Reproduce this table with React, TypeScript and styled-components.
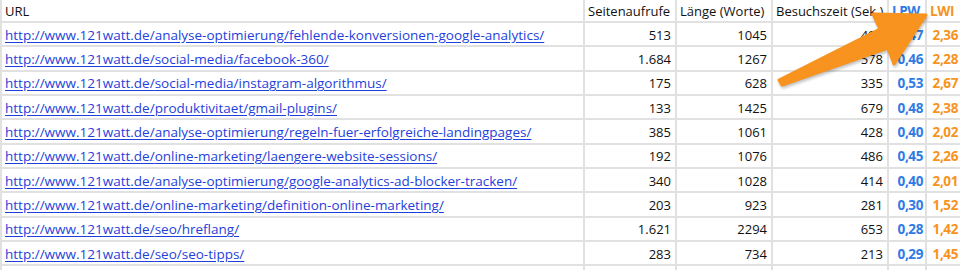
import { FC, Fragment } from 'react'
import styled, { createGlobalStyle } from 'styled-components'

const GlobalStyle = createGlobalStyle`
	html, body {
		margin: 0;
		padding: 0;
		background: #fff;
		overflow: hidden;
	}
`

const rows = [
	['analyse-optimierung/fehlende-konversionen-google-analytics/', '513', '1045', '491', '0,47', '2,36'],
	['social-media/facebook-360/', '1.684', '1267', '578', '0,46', '2,28'],
	['social-media/instagram-algorithmus/', '175', '628', '335', '0,53', '2,67'],
	['produktivitaet/gmail-plugins/', '133', '1425', '679', '0,48', '2,38'],
	['analyse-optimierung/regeln-fuer-erfolgreiche-landingpages/', '385', '1061', '428', '0,40', '2,02'],
	['online-marketing/laengere-website-sessions/', '192', '1076', '486', '0,45', '2,26'],
	['analyse-optimierung/google-analytics-ad-blocker-tracken/', '340', '1028', '414', '0,40', '2,01'],
	['online-marketing/definition-online-marketing/', '203', '923', '281', '0,30', '1,52'],
	['seo/hreflang/', '1.621', '2294', '653', '0,28', '1,42'],
	['seo/seo-tipps/', '283', '734', '213', '0,29', '1,45']
]

// 表格容器
const Sheet = styled.div`
	position: relative;
	width: 960px;
	height: 270px;
	overflow: hidden;
	font-family: 'Open Sans', 'Liberation Sans', sans-serif;
	font-size: 13px;
	color: #111;
`

const Grid = styled.div`
	display: grid;
	grid-template-columns: 581px 90px 94px 114px 36px 33px;
	grid-template-rows: 22px;
	grid-auto-rows: 22.33px;
	gap: 2px;
	background: #e1e1e1;
	padding: 0 0 0 2px;
	margin-top: -1px;
	width: 980px;
`

const Cell = styled.div<{ $align?: 'left' | 'right'; $tone?: 'blue' | 'orange' }>`
	background: #fff;
	display: flex;
	align-items: center;
	justify-content: ${(p) => (p.$align === 'right' ? 'flex-end' : 'flex-start')};
	padding: ${(p) => (p.$align === 'right' ? (p.$tone ? '1px 2px 0 0' : '1px 4px 0 0') : '1px 0 0 3px')};
	white-space: nowrap;
	overflow: hidden;
	color: ${(p) => (p.$tone === 'blue' ? '#2f7be6' : p.$tone === 'orange' ? '#f7931e' : '#111')};
	font-weight: ${(p) => (p.$tone ? 700 : 400)};
	font-size: ${(p) => (p.$tone ? '13.5px' : '13px')};
	letter-spacing: ${(p) => (p.$tone ? '-0.4px' : '0')};
`

const Link = styled.a`
	color: #1f3fdc;
	font-size: 13.5px;
	text-decoration: underline;
	text-underline-offset: 2px;
`

const Arrow = styled.svg`
	position: absolute;
	left: 0;
	top: 0;
	pointer-events: none;
	filter: drop-shadow(1px 2px 1.5px rgba(0, 0, 0, 0.25));
`

export const App: FC = () => {
	return (
		<Sheet>
			<GlobalStyle />
			<Grid>
				<Cell>URL</Cell>
				<Cell>Seitenaufrufe</Cell>
				<Cell>Länge (Worte)</Cell>
				<Cell>Besuchszeit (Sek.)</Cell>
				<Cell $tone="blue">LPW</Cell>
				<Cell $tone="orange">LWI</Cell>
				{rows.map((r) => (
					<Fragment key={r[0]}>
						<Cell>
							<Link href="#">http://www.121watt.de/{r[0]}</Link>
						</Cell>
						<Cell $align="right">{r[1]}</Cell>
						<Cell $align="right">{r[2]}</Cell>
						<Cell $align="right">{r[3]}</Cell>
						<Cell $align="right" $tone="blue">{r[4]}</Cell>
						<Cell $align="right" $tone="orange">{r[5]}</Cell>
					</Fragment>
				))}
				{Array.from({ length: 6 }).map((_, i) => (
					<Cell key={'e' + i} />
				))}
			</Grid>
			<Arrow width="960" height="270" viewBox="0 0 960 270">
				<polygon
					points="779,80 880,29 873,14 926,15 894,64 888,48 782,85"
					fill="#f7931e"
					stroke="#f7931e"
					strokeWidth="3"
					strokeLinejoin="round"
				/>
			</Arrow>
		</Sheet>
	)
}

export default App
